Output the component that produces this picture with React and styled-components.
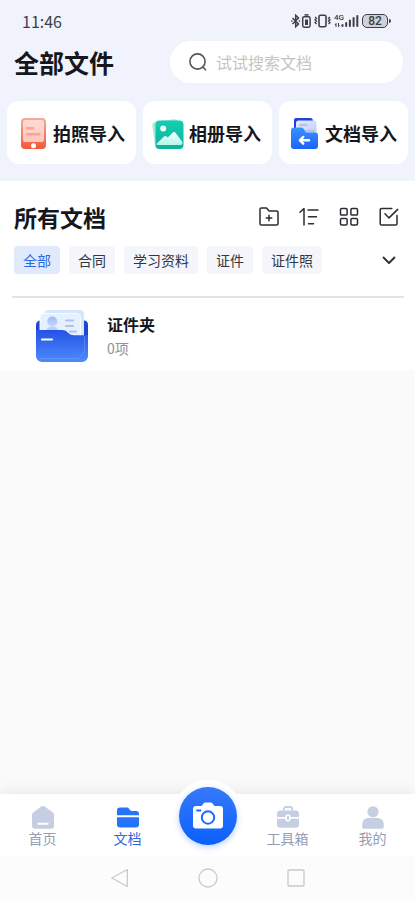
import React, { useState } from "react";
import styled, { createGlobalStyle } from "styled-components";

const GlobalStyle = createGlobalStyle`
  * {
    box-sizing: border-box;
  }

  body {
    margin: 0;
    background: #fafafa;
    font-family: "Noto Sans CJK SC", sans-serif;
    color: #15171c;
  }

  button,
  input {
    font-family: inherit;
  }
`;

const Page = styled.div`
  display: flex;
  flex-direction: column;
  min-height: 100vh;
`;

const Header = styled.header`
  display: flex;
  flex-direction: column;
  background: #f0f3fb;
  padding-bottom: 17px;
`;

// System status bar
const StatusBar = styled.div`
  display: flex;
  align-items: center;
  justify-content: space-between;
  height: 41px;
  padding: 0 24px 0 22px;
`;

const Clock = styled.span`
  font-size: 16px;
  line-height: 20px;
  color: #3d3f45;
`;

const StatusIcons = styled.div`
  display: flex;
  align-items: center;
  gap: 3px;
  color: #3d3f45;

  svg {
    display: block;
  }
`;

const Signal = styled.span`
  position: relative;
  display: block;
`;

const NetworkType = styled.span`
  position: absolute;
  top: 0;
  left: 0;
  font-family: "Roboto", sans-serif;
  font-size: 8px;
  font-weight: 500;
  line-height: 8px;
`;

const BatteryLevel = styled.span`
  display: flex;
  align-items: center;
`;

const BatteryBody = styled.span`
  display: flex;
  align-items: center;
  justify-content: center;
  width: 26px;
  height: 14px;
  border: 1px solid #3d3f45;
  border-radius: 5px;
  background: #d0d3da;
  font-family: "Roboto", sans-serif;
  font-size: 12px;
  font-weight: 500;
  line-height: 12px;
`;

const BatteryTip = styled.span`
  width: 2px;
  height: 4px;
  margin-left: 1px;
  border-radius: 0 2px 2px 0;
  background: #3d3f45;
`;

const TitleRow = styled.div`
  display: flex;
  align-items: center;
  justify-content: space-between;
  gap: 24px;
  padding: 0 12px 0 14px;
`;

const PageTitle = styled.h1`
  flex: none;
  margin: 0;
  font-size: 25px;
  font-weight: 700;
  line-height: 42px;
`;

const SearchBox = styled.label`
  display: flex;
  align-items: center;
  flex: 0 1 233px;
  min-width: 0;
  gap: 8px;
  height: 42px;
  padding: 0 18px;
  border-radius: 21px;
  background: #ffffff;
  color: #55575c;

  svg {
    flex: none;
  }
`;

const SearchInput = styled.input`
  flex: 1;
  min-width: 0;
  padding: 0;
  border: none;
  outline: none;
  background: transparent;
  font-size: 16px;
  line-height: 24px;
  color: #15171c;

  &::placeholder {
    color: #c4c4c6;
    opacity: 1;
  }
`;

const ImportGrid = styled.div`
  display: grid;
  grid-template-columns: repeat(3, 1fr);
  gap: 7px;
  padding: 18px 7px 0;
`;

const ImportCard = styled.button`
  display: flex;
  align-items: center;
  justify-content: center;
  gap: 4px;
  height: 63px;
  padding: 0 5px 0 0;
  border: none;
  border-radius: 12px;
  background: #ffffff;
  font-size: 18px;
  font-weight: 700;
  line-height: 26px;
  color: #15171c;
  white-space: nowrap;
  cursor: pointer;
`;

const Documents = styled.section`
  background: #ffffff;
`;

const SectionHead = styled.div`
  display: flex;
  align-items: center;
  justify-content: space-between;
  padding: 19px 16px 0 14px;
`;

const SectionTitle = styled.h2`
  margin: 0;
  font-size: 23px;
  font-weight: 700;
  line-height: 34px;
`;

const Actions = styled.div`
  display: flex;
  gap: 20px;
`;

const IconButton = styled.button`
  display: flex;
  align-items: center;
  justify-content: center;
  width: 20px;
  height: 20px;
  padding: 0;
  border: none;
  background: transparent;
  color: #2c2d31;
  cursor: pointer;
`;

const FilterRow = styled.div`
  display: flex;
  align-items: center;
  justify-content: space-between;
  padding: 12px 16px 22px 14px;
`;

const Chips = styled.div`
  display: flex;
  gap: 9px;
`;

const Chip = styled.button`
  height: 28px;
  padding: 0 9px;
  border: none;
  border-radius: 4px;
  background: ${(props) => (props.$active ? "#e1eafc" : "#f4f6fb")};
  color: ${(props) => (props.$active ? "#2b69e4" : "#36373c")};
  font-size: 14px;
  line-height: 26px;
  white-space: nowrap;
  cursor: pointer;
`;

const FileList = styled.ul`
  margin: 0 11px 0 12px;
  padding: 0;
  border-top: 2px solid #e3e3e4;
  list-style: none;
`;

const FileRow = styled.li`
  display: flex;
  align-items: center;
  gap: 18px;
  height: 72px;
  padding: 4px 0 0 23px;
`;

const FileName = styled.div`
  font-size: 16px;
  font-weight: 700;
  line-height: 24px;
`;

const FileCount = styled.div`
  font-size: 14px;
  line-height: 24px;
  color: #919194;
`;

const Blank = styled.div`
  flex: 1;
`;

const Footer = styled.footer`
  position: sticky;
  bottom: 0;
`;

const TabBar = styled.nav`
  display: grid;
  grid-template-columns: 1fr 1fr 75px 1fr 1fr;
  height: 62px;
  background: #ffffff;
  box-shadow: 0 -2px 14px rgba(0, 0, 0, 0.08);
`;

const Tab = styled.a`
  display: flex;
  flex-direction: column;
  align-items: center;
  padding-top: 11px;
  font-size: 14px;
  line-height: 18px;
  color: ${(props) => (props.$active ? "#2b69e4" : "#959db6")};
  text-decoration: none;

  svg {
    display: block;
    flex: none;
    color: ${(props) => (props.$active ? "#2673f9" : "#c6cee2")};
  }
`;

const CameraSlot = styled.div`
  position: relative;
`;

// Raised round button that sticks out above the tab bar
const CameraButton = styled.button`
  position: absolute;
  top: -14px;
  left: 50%;
  display: flex;
  align-items: center;
  justify-content: center;
  width: 72px;
  height: 72px;
  margin-left: -36px;
  padding: 0;
  border: 7px solid #ffffff;
  border-radius: 50%;
  background: #ffffff;
  cursor: pointer;
`;

const CameraDisc = styled.span`
  display: flex;
  align-items: center;
  justify-content: center;
  flex: none;
  width: 58px;
  height: 58px;
  border-radius: 50%;
  background: linear-gradient(180deg, #3679fb 0%, #0a60fb 100%);
  box-shadow: 0 2px 6px rgba(20, 100, 250, 0.3);
`;

const SystemNav = styled.div`
  display: flex;
  align-items: center;
  justify-content: center;
  gap: 68px;
  height: 44px;
  background: #fcfcfc;
`;

const SystemButton = styled(IconButton)`
  color: #c9c9cb;
`;

const BluetoothIcon = () => (
  <svg width="20" height="14" viewBox="0 0 20 14" fill="none" stroke="currentColor" strokeWidth="1.5">
    <path d="M1.5 4 7.500 10 4.700 12.700V1.300L7.500 4 1.500 10" />
    <path d="M.2 7h1.300M7.800 7h1.300" />
    <path d="M13.500.9h4" />
    <rect x="11.700" y="2.700" width="7.400" height="10.500" rx="1.600" />
    <path d="M14 5.500h3v5.500h-3z" fill="currentColor" stroke="none" />
  </svg>
);

const VibrateIcon = () => (
  <svg width="17" height="14" viewBox="0 0 17 14" fill="none" stroke="currentColor" strokeWidth="1.6">
    <rect x="5" y="1.2" width="7" height="11.6" rx="1.5" />
    <path d="M1 3l1.500 1.300L1 5.700l1.500 1.400L1 8.500l1.500 1.400M16 3l-1.500 1.300L16 5.700l-1.500 1.400L16 8.500l-1.500 1.400" strokeWidth="1.300" />
  </svg>
);

const SignalIcon = () => (
  <svg width="25" height="14" viewBox="0 0 25 14" fill="currentColor">
    <path d="M2 9 0.500 11h1v2h1v-4zM4.500 13 6 11H5V9H4v4z" />
    <rect x="7.500" y="10" width="2" height="3" rx="1" />
    <rect x="11.200" y="8" width="2" height="5" rx="1" />
    <rect x="14.900" y="5.500" width="2" height="7.500" rx="1" />
    <rect x="18.600" y="3" width="2" height="10" rx="1" />
    <rect x="22.300" y="1" width="2" height="12" rx="1" />
  </svg>
);

const SearchIcon = () => (
  <svg width="20" height="20" viewBox="0 0 20 20" fill="none" stroke="currentColor" strokeWidth="1.6" strokeLinecap="round">
    <circle cx="9.5" cy="9.5" r="7.6" />
    <path d="M14.9 15l2.6 2.8" />
  </svg>
);

const PhotoImportIcon = () => (
  <svg width="36" height="34" viewBox="0 0 36 34">
    <defs>
      <linearGradient id="photoBody" x1="0" y1="0" x2="0" y2="1">
        <stop offset="0" stopColor="#f9aa99" />
        <stop offset="1" stopColor="#f15937" />
      </linearGradient>
      <linearGradient id="photoScreen" x1="0" y1="0" x2="0" y2="1">
        <stop offset="0" stopColor="#ffdbd5" />
        <stop offset="1" stopColor="#ffc6bc" />
      </linearGradient>
    </defs>
    <rect x="8" y="2" width="25" height="31" rx="4" fill="url(#photoBody)" />
    <rect x="10" y="4" width="21" height="22" rx="2.5" fill="url(#photoScreen)" />
    <path d="M14 12.3h6M14 18.3h12.5" stroke="#f9a494" strokeWidth="2.6" strokeLinecap="round" />
    <circle cx="20.5" cy="29.7" r="2.5" fill="#fff" />
  </svg>
);

const AlbumImportIcon = () => (
  <svg width="36" height="34" viewBox="0 0 36 34">
    <defs>
      <linearGradient id="albumBody" x1="0" y1="0" x2="0" y2="1">
        <stop offset="0" stopColor="#12cfb0" />
        <stop offset="1" stopColor="#0eaf9d" />
      </linearGradient>
      <linearGradient id="albumHills" x1="0" y1="0" x2="0" y2="1">
        <stop offset="0" stopColor="#f5fffd" />
        <stop offset="1" stopColor="#b2f6ea" />
      </linearGradient>
    </defs>
    <rect x="4.5" y="4.5" width="26" height="26" rx="4" fill="#a5e8dc" transform="rotate(-8 17 17)" />
    <rect x="6.500" y="4.500" width="28" height="28.500" rx="4" fill="url(#albumBody)" />
    <circle cx="14.200" cy="12.500" r="3" fill="#effffc" />
    <path d="M8.700 29c-1.200 0-1.300-1-.6-1.800l6.600-6.500c1-1 1.800-1 2.800-.2l1.300 1 4.700-4.700c1-1 2-1 3 0l6.400 8.400c1.200 2 .4 3.800-1.600 3.800z" fill="url(#albumHills)" />
  </svg>
);

const DocImportIcon = () => (
  <svg width="36" height="34" viewBox="1 0 36 34">
    <defs>
      <linearGradient id="docFolder" x1="0" y1="0" x2="0" y2="1">
        <stop offset="0" stopColor="#3b92fc" />
        <stop offset="1" stopColor="#1c63f8" />
      </linearGradient>
      <linearGradient id="docPaper" x1="0" y1="0" x2="1" y2="1">
        <stop offset="0" stopColor="#e6ecff" />
        <stop offset="1" stopColor="#b9cbfc" />
      </linearGradient>
    </defs>
    <g transform="translate(3 0)">
      <path d="M9 2h14a3 3 0 0 1 3 3v20H7V4a2 2 0 0 1 2-2z" fill="#1f43dd" />
      <rect x="9" y="4.500" width="20.500" height="22" rx="2.500" fill="url(#docPaper)" />
      <path d="M13.200 9h6.300M17.500 14.700h9.200" stroke="#b4c1f0" strokeWidth="2.500" strokeLinecap="round" />
      <path d="M4 14.500a3 3 0 0 1 3-3h7c1.500 0 2.400.7 3.100 2l.9 1.800c.4.8 1 1.200 2 1.200h8.500a2.500 2.500 0 0 1 2.500 2.500v11a3 3 0 0 1-3 3H7a3 3 0 0 1-3-3z" fill="url(#docFolder)" />
      <path d="M22 24.300h-9M16.300 20.900 12.900 24.300l3.400 3.400" fill="none" stroke="#fff" strokeWidth="2.400" strokeLinecap="round" strokeLinejoin="round" />
    </g>
  </svg>
);

const FolderPlusIcon = () => (
  <svg width="20" height="20" viewBox="0 0 20 20" fill="none" stroke="currentColor" strokeWidth="1.5" strokeLinejoin="round" strokeLinecap="round">
    <path d="M1 2.3C1 1.5 1.5 1 2.3 1h5.2l2.6 3h7.600c.8 0 1.300.5 1.300 1.300v11.400c0 .8-.5 1.300-1.300 1.300H2.300c-.8 0-1.300-.5-1.300-1.300z" />
    <path d="M7.200 11h5.600M10 8.200v5.600" />
  </svg>
);

const SortIcon = () => (
  <svg width="20" height="20" viewBox="0 0 20 20" fill="none" stroke="currentColor" strokeWidth="1.5" strokeLinecap="round" strokeLinejoin="round">
    <path d="M1 5.300 5 1.500V18M9 3h10M9.500 9.700h8M9.500 16.700h5" />
  </svg>
);

const GridIcon = () => (
  <svg width="20" height="20" viewBox="0 0 20 20" fill="none" stroke="currentColor" strokeWidth="1.5">
    <rect x="1.5" y="1.5" width="6.6" height="6.6" rx="1.2" />
    <rect x="11.9" y="1.5" width="6.6" height="6.6" rx="1.2" />
    <rect x="1.5" y="11.4" width="6.6" height="6.6" rx="1.2" />
    <rect x="11.9" y="11.4" width="6.6" height="6.6" rx="1.2" />
  </svg>
);

const SelectIcon = () => (
  <svg width="20" height="20" viewBox="0 0 20 20" fill="none" stroke="currentColor" strokeWidth="1.5" strokeLinecap="round" strokeLinejoin="round">
    <path d="M12.800 1.400H2.500c-.8 0-1.300.5-1.300 1.300v14c0 .8.5 1.300 1.300 1.300h14.200c.8 0 1.300-.5 1.300-1.300V8.500" />
    <path d="M6 6.800 10 10.900 18.700 2.400" />
  </svg>
);

const ChevronIcon = () => (
  <svg width="20" height="20" viewBox="0 0 20 20" fill="none" stroke="currentColor" strokeWidth="1.8" strokeLinecap="round" strokeLinejoin="round">
    <path d="M4.500 7.500 10 13l5.500-5.500" />
  </svg>
);

const CardFolderIcon = () => (
  <svg width="54" height="54" viewBox="0 0 54 54">
    <defs>
      <linearGradient id="cardFolder" x1="0" y1="0" x2="0" y2="1">
        <stop offset="0" stopColor="#2452e6" />
        <stop offset="1" stopColor="#4d8bfb" />
      </linearGradient>
      <linearGradient id="cardPaper" x1="0" y1="0" x2="0" y2="1">
        <stop offset="0" stopColor="#e4f1fe" />
        <stop offset="1" stopColor="#e9effe" />
      </linearGradient>
      <linearGradient id="cardPerson" x1="0" y1="0" x2="0" y2="1">
        <stop offset="0" stopColor="#9db9f6" />
        <stop offset="1" stopColor="#c7d8fc" />
      </linearGradient>
    </defs>
    <path d="M1 16c0-3 2-4.500 4-4.500h44c2.500 0 4 1.500 4 4.500v22H1z" fill="#1d47cf" />
    <rect x="9.500" y="1" width="39.500" height="36" rx="4" fill="#d6e6fc" />
    <rect x="5" y="4.500" width="40.500" height="34" rx="4" fill="url(#cardPaper)" stroke="#f7fbff" strokeWidth="1" />
    <circle cx="17.300" cy="12.500" r="5" fill="url(#cardPerson)" />
    <path d="M11.500 22c0-3 2-4.500 5.800-4.500s5.800 1.500 5.800 4.500z" fill="#b9cffb" />
    <path d="M31 11.500h7M31 17h7M35 22.500h6" stroke="#a9c2f8" strokeWidth="2.200" strokeLinecap="round" />
    <path d="M1 21h26c2.500 0 4 .8 5.500 2.200l1.500 1.300c1.300 1.100 2.700 1.700 4.700 1.700H53V47a6 6 0 0 1-6 6H7a6 6 0 0 1-6-6z" fill="url(#cardFolder)" />
    <path d="M49.500 27v16l-6 6.500H5" fill="none" stroke="#78a8fd" strokeWidth=".7" opacity=".6" />
    <path d="M7 30.500h10" stroke="#fff" strokeWidth="2.200" strokeLinecap="round" />
  </svg>
);

const HomeIcon = () => (
  <svg width="24" height="24" viewBox="0 0 24 24" fill="currentColor">
    <path d="M10.300 1.600a3 3 0 0 1 3.400 0l7.800 5.600c1 .7 1.500 1.700 1.500 2.900v11c0 1.700-1 2.700-2.700 2.700H3.700C2 23.800 1 22.800 1 21.100v-11c0-1.200.5-2.200 1.500-2.900z" />
    <path d="M7.300 18.700h9.400" stroke="#fff" strokeWidth="2" strokeLinecap="round" />
  </svg>
);

const DocsIcon = () => (
  <svg width="24" height="24" viewBox="0 0 24 24" fill="currentColor">
    <path d="M1 5.500C1 3.500 2 2.500 4 2.500h6.500c1.200 0 2 .4 2.700 1.400l1 1.300c.4.600.9.800 1.700.8H20c2 0 3 1 3 3v1.200H1z" />
    <path d="M1 12.200h22v7c0 2.300-1 3.300-3.300 3.300H4.300C2 22.500 1 21.500 1 19.200z" />
  </svg>
);

const ToolboxIcon = () => (
  <svg width="24" height="24" viewBox="0 0 24 24" fill="currentColor">
    <path d="M7.800 6V4a2 2 0 0 1 2-2h4.400a2 2 0 0 1 2 2v2" fill="none" stroke="currentColor" strokeWidth="1.800" />
    <path d="M1 9c0-2.200 1-3.500 3.300-3.500h15.400C22 5.500 23 6.800 23 9v3h-8.300c0-1.800-1-2.800-2.700-2.800S9.300 10.200 9.300 12H1z" />
    <path d="M1 13.700h8.300c0 1.800 1 2.800 2.700 2.800s2.700-1 2.700-2.800H23v5.500c0 2.300-1 3.500-3.300 3.500H4.300C2 22.700 1 21.500 1 19.200z" />
    <rect x="11" y="10.800" width="2" height="4.200" rx="1" />
  </svg>
);

const UserIcon = () => (
  <svg width="24" height="24" viewBox="0 0 24 24" fill="currentColor">
    <circle cx="12" cy="6.800" r="5.600" />
    <path d="M1.200 20c0-4.500 2.500-7 6.800-7h8c4.300 0 6.800 2.500 6.800 7v1.500c0 1.500-.8 2.300-2.300 2.300h-17c-1.500 0-2.300-.8-2.300-2.300z" />
  </svg>
);

const CameraIcon = () => (
  <svg width="32" height="30" viewBox="0 0 32 30">
    <path d="M4 5h5.500l2-2.500C12 1.800 12.600 1.500 13.500 1.500h5c.9 0 1.500.3 2 1L22.500 5H28a3 3 0 0 1 3 3v16.500a3 3 0 0 1-3 3H4a3 3 0 0 1-3-3V8a3 3 0 0 1 3-3z" fill="#fff" />
    <circle cx="16" cy="16.500" r="6.200" fill="#fff" stroke="#1b69fb" strokeWidth="2" />
    <path d="M5 9.500h3.500" stroke="#1b69fb" strokeWidth="1.800" strokeLinecap="round" />
  </svg>
);

const BackIcon = () => (
  <svg width="20" height="20" viewBox="0 0 20 20" fill="none" stroke="currentColor" strokeWidth="1.300" strokeLinejoin="round">
    <path d="M17.300 1.500v17L1.800 10z" />
  </svg>
);

const CircleIcon = () => (
  <svg width="20" height="20" viewBox="0 0 20 20" fill="none" stroke="currentColor" strokeWidth="1.300">
    <circle cx="10" cy="10" r="9" />
  </svg>
);

const SquareIcon = () => (
  <svg width="20" height="20" viewBox="0 0 20 20" fill="none" stroke="currentColor" strokeWidth="1.300">
    <rect x="2" y="2" width="16" height="16" rx="1" />
  </svg>
);

const imports = [
  { label: "拍照导入", Icon: PhotoImportIcon },
  { label: "相册导入", Icon: AlbumImportIcon },
  { label: "文档导入", Icon: DocImportIcon },
];

const filters = ["全部", "合同", "学习资料", "证件", "证件照"];

const actions = [
  { label: "新建文件夹", Icon: FolderPlusIcon },
  { label: "排序", Icon: SortIcon },
  { label: "宫格视图", Icon: GridIcon },
  { label: "多选", Icon: SelectIcon },
];

const files = [{ name: "证件夹", count: 0 }];

function App() {
  const [keyword, setKeyword] = useState("");
  const [filter, setFilter] = useState("全部");

  return (
    <Page>
      <GlobalStyle />
      <Header>
        <StatusBar>
          <Clock>11:46</Clock>
          <StatusIcons>
            <BluetoothIcon />
            <VibrateIcon />
            <Signal>
              <NetworkType>4G</NetworkType>
              <SignalIcon />
            </Signal>
            <BatteryLevel>
              <BatteryBody>82</BatteryBody>
              <BatteryTip />
            </BatteryLevel>
          </StatusIcons>
        </StatusBar>
        <TitleRow>
          <PageTitle>全部文件</PageTitle>
          <SearchBox htmlFor="search">
            <SearchIcon />
            <SearchInput
              id="search"
              type="text"
              aria-label="搜索文档"
              placeholder="试试搜索文档"
              value={keyword}
              onChange={(e) => setKeyword(e.target.value)}
            />
          </SearchBox>
        </TitleRow>
        <ImportGrid>
          {imports.map(({ label, Icon }) => (
            <ImportCard key={label} type="button">
              <Icon />
              {label}
            </ImportCard>
          ))}
        </ImportGrid>
      </Header>

      <Documents>
        <SectionHead>
          <SectionTitle>所有文档</SectionTitle>
          <Actions>
            {actions.map(({ label, Icon }) => (
              <IconButton key={label} type="button" aria-label={label}>
                <Icon />
              </IconButton>
            ))}
          </Actions>
        </SectionHead>
        <FilterRow>
          <Chips>
            {filters.map((name) => (
              <Chip
                key={name}
                type="button"
                $active={filter === name}
                onClick={() => setFilter(name)}
              >
                {name}
              </Chip>
            ))}
          </Chips>
          <IconButton type="button" aria-label="展开">
            <ChevronIcon />
          </IconButton>
        </FilterRow>
        <FileList>
          {files.map((file) => (
            <FileRow key={file.name}>
              <CardFolderIcon />
              <div>
                <FileName>{file.name}</FileName>
                <FileCount>{file.count}项</FileCount>
              </div>
            </FileRow>
          ))}
        </FileList>
      </Documents>

      <Blank />

      <Footer>
        <TabBar>
          <Tab href="#home">
            <HomeIcon />
            首页
          </Tab>
          <Tab href="#docs" $active>
            <DocsIcon />
            文档
          </Tab>
          <CameraSlot>
            <CameraButton type="button" aria-label="拍照">
              <CameraDisc>
                <CameraIcon />
              </CameraDisc>
            </CameraButton>
          </CameraSlot>
          <Tab href="#tools">
            <ToolboxIcon />
            工具箱
          </Tab>
          <Tab href="#me">
            <UserIcon />
            我的
          </Tab>
        </TabBar>
        <SystemNav>
          <SystemButton type="button" aria-label="返回">
            <BackIcon />
          </SystemButton>
          <SystemButton type="button" aria-label="主屏幕">
            <CircleIcon />
          </SystemButton>
          <SystemButton type="button" aria-label="最近任务">
            <SquareIcon />
          </SystemButton>
        </SystemNav>
      </Footer>
    </Page>
  );
}

export default App;
